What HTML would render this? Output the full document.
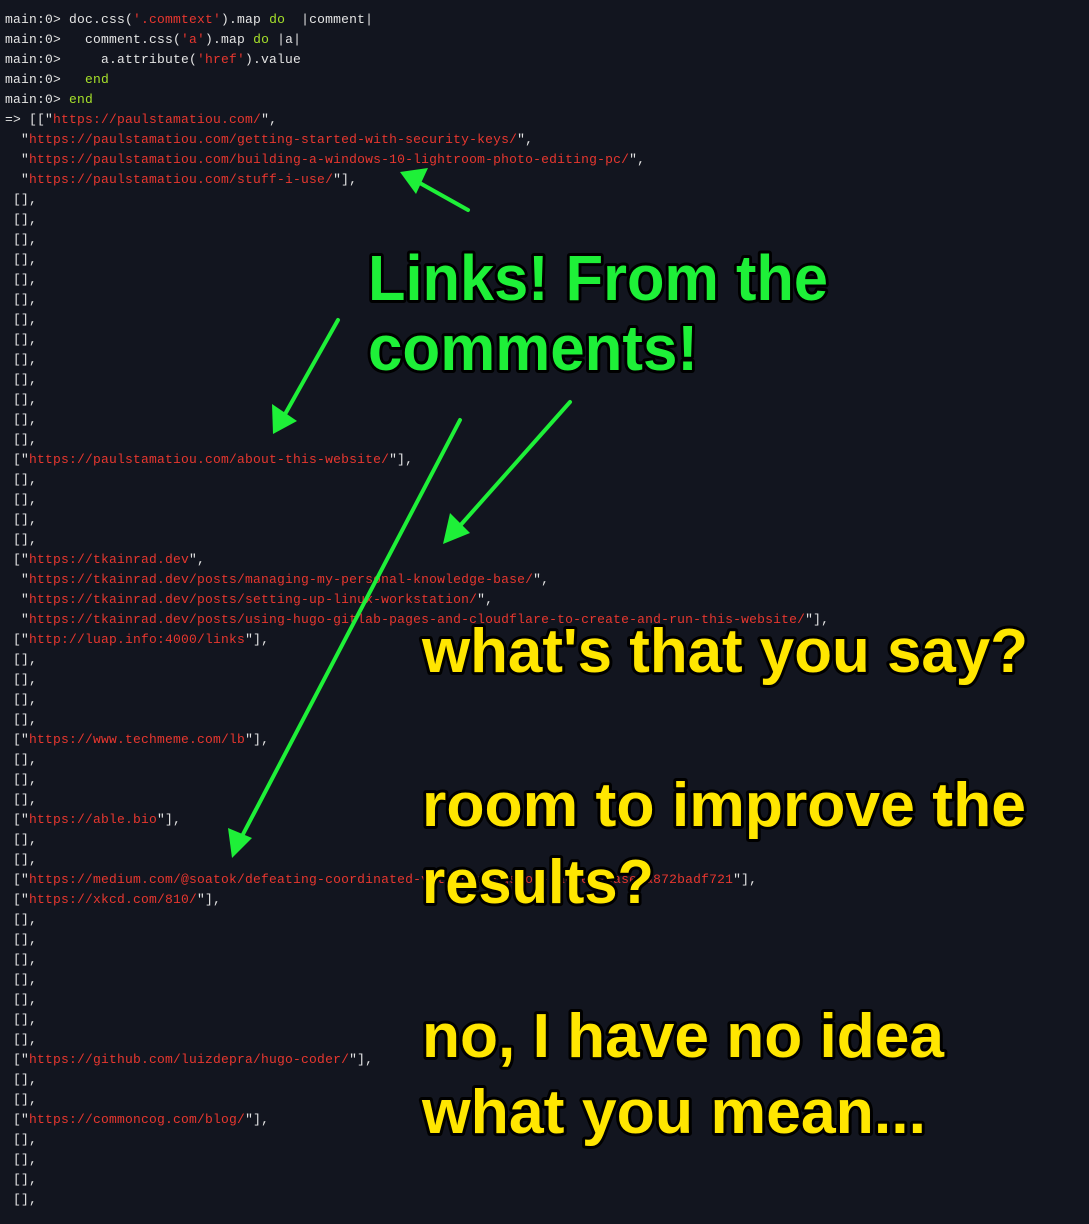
<!DOCTYPE html>
<html><head><meta charset="utf-8"><style>
html,body{margin:0;padding:0;background:#12151f;width:1089px;height:1224px;overflow:hidden}
pre{position:absolute;left:5px;top:10px;margin:0;font-family:"Liberation Mono",monospace;font-size:13px;line-height:20px;letter-spacing:0.2px;color:#e4e4e4}
.r{color:#e8372f}.g{color:#a6e02a}
svg{position:absolute;left:0;top:0}
.t{font-family:"Liberation Sans",sans-serif;font-weight:bold;paint-order:stroke;stroke:#000;stroke-width:6px;stroke-linejoin:round}
</style></head><body>
<pre>main:0&gt; doc.css(<span class="r">'.commtext'</span>).map <span class="g">do</span>  |comment|
main:0&gt;   comment.css(<span class="r">'a'</span>).map <span class="g">do</span> |a|
main:0&gt;     a.attribute(<span class="r">'href'</span>).value
main:0&gt;   <span class="g">end</span>
main:0&gt; <span class="g">end</span>
=&gt; [["<span class="r">https://paulstamatiou.com/</span>",
  "<span class="r">https://paulstamatiou.com/getting-started-with-security-keys/</span>",
  "<span class="r">https://paulstamatiou.com/building-a-windows-10-lightroom-photo-editing-pc/</span>",
  "<span class="r">https://paulstamatiou.com/stuff-i-use/</span>"],
 [],
 [],
 [],
 [],
 [],
 [],
 [],
 [],
 [],
 [],
 [],
 [],
 [],
 ["<span class="r">https://paulstamatiou.com/about-this-website/</span>"],
 [],
 [],
 [],
 [],
 ["<span class="r">https://tkainrad.dev</span>",
  "<span class="r">https://tkainrad.dev/posts/managing-my-personal-knowledge-base/</span>",
  "<span class="r">https://tkainrad.dev/posts/setting-up-linux-workstation/</span>",
  "<span class="r">https://tkainrad.dev/posts/using-hugo-gitlab-pages-and-cloudflare-to-create-and-run-this-website/</span>"],
 ["<span class="r">http://luap.info:4000/links</span>"],
 [],
 [],
 [],
 [],
 ["<span class="r">https://www.techmeme.com/lb</span>"],
 [],
 [],
 [],
 ["<span class="r">https://able.bio</span>"],
 [],
 [],
 ["<span class="r">https://medium.com/@soatok/defeating-coordinated-voting-rings-on-hacker-case-a872badf721</span>"],
 ["<span class="r">https://xkcd.com/810/</span>"],
 [],
 [],
 [],
 [],
 [],
 [],
 [],
 ["<span class="r">https://github.com/luizdepra/hugo-coder/</span>"],
 [],
 [],
 ["<span class="r">https://commoncog.com/blog/</span>"],
 [],
 [],
 [],
 [],</pre>
<svg width="1089" height="1224" viewBox="0 0 1089 1224">
<g stroke="#1ef038" stroke-width="4" stroke-linecap="round">
<line x1="468" y1="210" x2="418" y2="182"/>
<line x1="338" y1="320" x2="284" y2="416"/>
<line x1="570" y1="402" x2="458" y2="528"/>
<line x1="460" y1="420" x2="240" y2="840"/>
</g>
<g fill="#1ef038">
<polygon points="400,172 428,168 416,194"/>
<polygon points="273,434 272,404 297,421"/>
<polygon points="443,544 450,513 470,533"/>
<polygon points="232,858 228,828 252,838"/>
</g>
<g class="t" fill="#1ef038">
<text x="368" y="300" font-size="64" textLength="460" lengthAdjust="spacingAndGlyphs">Links! From the</text>
<text x="368" y="370" font-size="64" textLength="330" lengthAdjust="spacingAndGlyphs">comments!</text>
</g>
<g class="t" fill="#ffe600">
<text x="422" y="672" font-size="62" textLength="606" lengthAdjust="spacingAndGlyphs">what's that you say?</text>
<text x="422" y="826" font-size="62" textLength="604" lengthAdjust="spacingAndGlyphs">room to improve the</text>
<text x="422" y="903" font-size="62" textLength="232" lengthAdjust="spacingAndGlyphs">results?</text>
<text x="422" y="1057" font-size="62" textLength="522" lengthAdjust="spacingAndGlyphs">no, I have no idea</text>
<text x="422" y="1133" font-size="62" textLength="504" lengthAdjust="spacingAndGlyphs">what you mean...</text>
</g>
</svg>
</body></html>
